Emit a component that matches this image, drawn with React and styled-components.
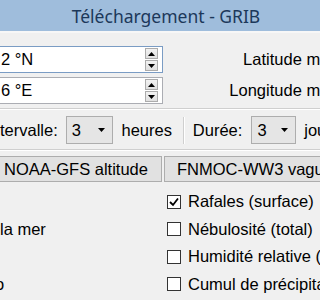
import React from 'react';
import styled, { createGlobalStyle } from 'styled-components';

const Global = createGlobalStyle`
  html, body { margin: 0; padding: 0; overflow: hidden; background: #f0f0f0; }
  body { width: 320px; height: 300px; }
`;

const Window = styled.div`
  width: 340px;
  height: 300px;
  background: #f0f0f0;
  font-family: "Liberation Sans", Arial, sans-serif;
  font-size: 16.5px;
  color: #000;
  display: flex;
  flex-direction: column;
`;

const TitleBar = styled.div`
  height: 31px;
  padding-right: 8px;
  background: #9fbddc;
  border-bottom: 2px solid #f7f7f7;
  display: flex;
  align-items: center;
  justify-content: center;
  font-family: "Noto Sans", "Open Sans", sans-serif;
  font-size: 17.5px;
  color: #1c385a;
`;

const Body = styled.div`
  padding-top: 13px;
  display: flex;
  flex-direction: column;
`;

const CoordRow = styled.div`
  display: grid;
  grid-template-columns: 164px 1fr;
  height: 27px;
  margin-bottom: 4px;
  margin-left: -1px;
  align-items: center;
`;

const SpinBox = styled.div`
  height: 27px;
  box-sizing: border-box;
  background: #fff;
  border: 1px solid ${p => (p.$focused ? '#7a9cc4' : '#abadb3')};
  display: flex;
  align-items: center;
  justify-content: space-between;
  padding-right: 4px;
`;

const SpinValue = styled.span`
  padding-left: 1px;
`;

const SpinButtons = styled.div`
  display: flex;
  flex-direction: column;
  gap: 1px;
`;

const SpinBtn = styled.div`
  width: 13px;
  height: 11px;
  box-sizing: border-box;
  border: 1px solid #acacac;
  background: linear-gradient(#f2f2f2, #e0e0e0);
  display: flex;
  align-items: center;
  justify-content: center;
`;

const CoordLabel = styled.span`
  text-align: right;
  padding-right: 7px;
  white-space: nowrap;
`;

const HLine = styled.div`
  height: 0;
  border-top: 1px solid #cfcfcf;
  border-bottom: 1px solid #ffffff;
  margin: ${p => p.$m};
`;

const OptionsRow = styled.div`
  display: flex;
  align-items: center;
  height: 28px;
  white-space: nowrap;
`;

const Text = styled.span`
  margin-right: ${p => p.$mr || 0}px;
`;

const Combo = styled.div`
  width: ${p => p.$w}px;
  height: 28px;
  box-sizing: border-box;
  border: 1px solid #adadad;
  background: #e5e5e5;
  display: flex;
  align-items: center;
  justify-content: space-between;
  padding: 0 7px 0 5px;
  margin-right: 8px;
`;

const VSep = styled.div`
  width: 1px;
  height: 27px;
  background: #cfcfcf;
  border-right: 1px solid #fff;
  margin: 0 8px 0 0;
`;

const ModelRow = styled.div`
  display: grid;
  grid-template-columns: 163px 1fr;
  column-gap: 2px;
  margin-left: -1px;
  height: 26px;
`;

const ModelButton = styled.div`
  box-sizing: border-box;
  border: 1px solid #adadad;
  background: #e1e1e1;
  display: flex;
  align-items: center;
  padding-left: ${p => p.$pl}px;
  white-space: nowrap;
  overflow: hidden;
`;

const ParamGrid = styled.div`
  display: grid;
  grid-template-columns: 167px 1fr;
  grid-auto-rows: 27.5px;
  margin-top: 6px;
  white-space: nowrap;
`;

const LeftCell = styled.div`
  display: flex;
  align-items: center;
  margin-left: ${p => p.$ml || 0}px;
`;

const CheckCell = styled.label`
  display: flex;
  align-items: center;
  gap: 7px;
`;

const Box = styled.span`
  width: 14px;
  height: 14px;
  box-sizing: border-box;
  border: 1px solid #333;
  background: #fff;
  display: flex;
  align-items: center;
  justify-content: center;
`;

const Up = () => (
  <svg width="7" height="4" viewBox="0 0 7 4"><path d="M0 4 L3.5 0 L7 4 Z" fill="#000" /></svg>
);
const Down = () => (
  <svg width="7" height="4" viewBox="0 0 7 4"><path d="M0 0 L3.5 4 L7 0 Z" fill="#000" /></svg>
);

const Spin = ({ value, focused }) => (
  <SpinBox $focused={focused}>
    <SpinValue>{value}</SpinValue>
    <SpinButtons>
      <SpinBtn><Up /></SpinBtn>
      <SpinBtn><Down /></SpinBtn>
    </SpinButtons>
  </SpinBox>
);

const Check = ({ checked, label }) => (
  <CheckCell>
    <Box>
      {checked && (
        <svg width="10" height="10" viewBox="0 0 10 10">
          <path d="M1 5 L4 8 L9 1.5" fill="none" stroke="#000" strokeWidth="1.8" />
        </svg>
      )}
    </Box>
    <span>{label}</span>
  </CheckCell>
);

export default function App() {
  return (
    <Window>
      <Global />
      <TitleBar>Téléchargement - GRIB</TitleBar>
      <Body>
        <CoordRow>
          <Spin value="2 °N" focused />
          <CoordLabel>Latitude min</CoordLabel>
        </CoordRow>
        <CoordRow>
          <Spin value="6 °E" />
          <CoordLabel>Longitude min</CoordLabel>
        </CoordRow>
        <HLine $m="0 0 6px 0" />
        <OptionsRow>
          <Text $mr={8}>tervalle:</Text>
          <Combo $w={50}><span>3</span><Down /></Combo>
          <Text $mr={11}>heures</Text>
          <VSep />
          <Text $mr={9}>Durée:</Text>
          <Combo $w={47}><span>3</span><Down /></Combo>
          <Text>jours</Text>
        </OptionsRow>
        <HLine $m="5px 0 5px 0" />
        <ModelRow>
          <ModelButton $pl={4}>NOAA-GFS altitude</ModelButton>
          <ModelButton $pl={12}>FNMOC-WW3 vagues</ModelButton>
        </ModelRow>
        <ParamGrid>
          <LeftCell />
          <Check checked label="Rafales (surface)" />
          <LeftCell>la mer</LeftCell>
          <Check label="Nébulosité (total)" />
          <LeftCell />
          <Check label="Humidité relative (2 m)" />
          <LeftCell $ml={-5}>o</LeftCell>
          <Check label="Cumul de précipitations" />
        </ParamGrid>
      </Body>
    </Window>
  );
}
